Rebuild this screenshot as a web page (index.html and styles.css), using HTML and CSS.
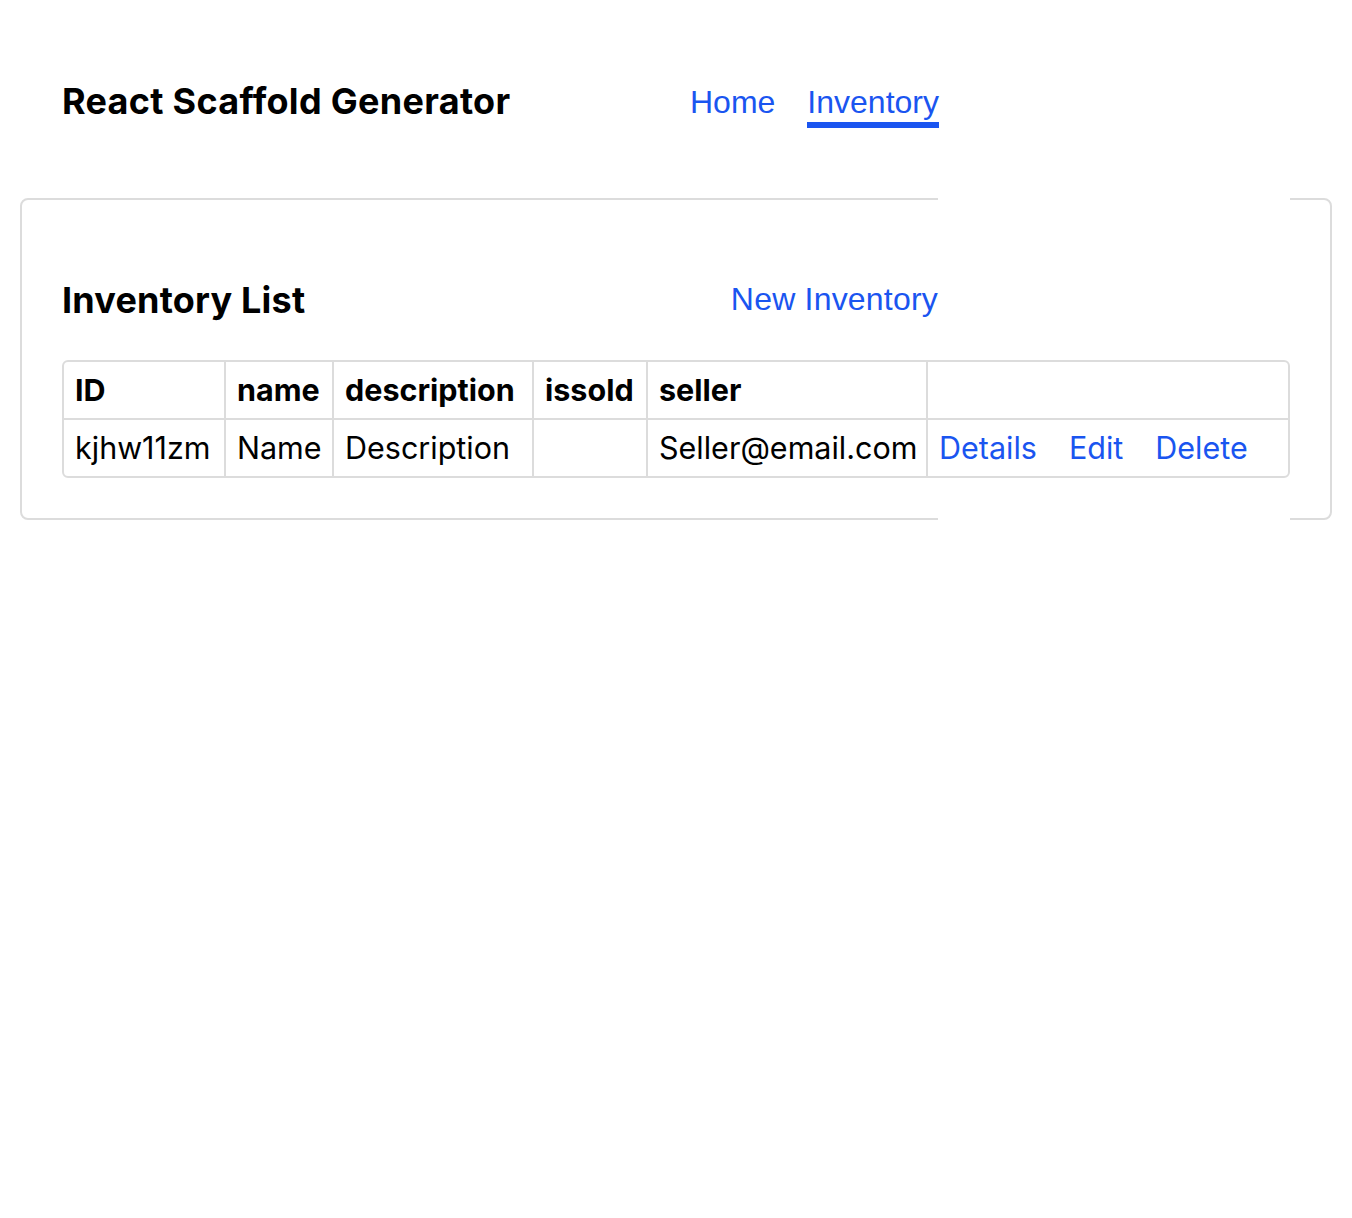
FILE: index.html
```html
<!DOCTYPE html>
<html lang="en">
<head>
<meta charset="utf-8">
<title>React Scaffold Generator</title>
<link rel="stylesheet" href="styles.css">
</head>
<body>
<header class="topbar">
  <div class="brand">React Scaffold Generator</div>
  <nav class="nav">
    <a class="nav-link" href="#">Home</a>
    <a class="nav-link active" href="#">Inventory</a>
  </nav>
</header>
<main class="card">
  <div class="card-head">
    <h2 class="card-title">Inventory List</h2>
    <a class="new-link" href="#">New Inventory</a>
  </div>
  <table class="grid">
    <colgroup>
      <col class="c-id"><col class="c-name"><col class="c-desc"><col class="c-sold"><col class="c-seller"><col class="c-actions">
    </colgroup>
    <thead>
      <tr><th>ID</th><th>name</th><th>description</th><th>issold</th><th>seller</th><th></th></tr>
    </thead>
    <tbody>
      <tr>
        <td>kjhw11zm</td><td>Name</td><td>Description</td><td></td><td>Seller@email.com</td>
        <td><div class="actions"><a href="#">Details</a><a href="#">Edit</a><a href="#">Delete</a></div></td>
      </tr>
    </tbody>
  </table>
  <span class="mask mask-top"></span>
  <span class="mask mask-bottom"></span>
</main>
</body>
</html>
```
FILE: styles.css
```css
* { box-sizing: border-box; }
body {
  margin: 0;
  background: #fff;
  color: #000;
  font-family: Inter, "Noto Sans", sans-serif;
}
a { text-decoration: none; color: #1a55f0; }

.topbar {
  display: grid;
  grid-template-columns: 628px auto;
  align-items: center;
  height: 198px;
  padding: 3px 62px 0;
}
.brand {
  font-size: 36px;
  font-weight: 700;
  letter-spacing: 0.3px;
}
.nav {
  align-self: start;
  margin-top: 81px;
  display: flex;
  gap: 32px;
  font-family: "Liberation Sans", Arial, sans-serif;
  font-size: 32px;
}
.nav-link {
  padding-bottom: 1px;
  border-bottom: 6px solid transparent;
}
.nav-link.active { border-bottom-color: #1a55f0; }

.card {
  position: relative;
  margin: 0 20px;
  border: 2px solid #dcdcdc;
  border-radius: 8px;
  padding: 0 40px 40px;
}
.card-head {
  display: flex;
  justify-content: space-between;
  align-items: center;
  width: 876px;
  height: 160px;
  padding-top: 40px;
}
.card-title {
  margin: 0;
  font-size: 36px;
  font-weight: 700;
  letter-spacing: 0.2px;
}
.new-link {
  margin-bottom: 2px;
  font-family: "Liberation Sans", Arial, sans-serif;
  font-size: 32px;
  letter-spacing: 0.2px;
}

.grid {
  width: 100%;
  table-layout: fixed;
  border-collapse: separate;
  border-spacing: 0;
  border: 2px solid #dcdcdc;
  border-radius: 6px;
  font-size: 30.5px;
  line-height: 36px;
}
.c-id { width: 160px; }
.c-name { width: 108px; }
.c-desc { width: 200px; }
.c-sold { width: 114px; }
.c-seller { width: 280px; }
.grid th, .grid td {
  text-align: left;
  padding: 10px 11px;
  height: 56px;
  white-space: nowrap;
  border-left: 2px solid #dcdcdc;
}
.grid th { font-weight: 700; }
.grid td { border-top: 2px solid #dcdcdc; }
.grid th:first-child, .grid td:first-child { border-left: 0; }
.actions { display: flex; gap: 32px; }

.mask {
  position: absolute;
  left: 916px;
  width: 352px;
  height: 4px;
  background: #fff;
}
.mask-top { top: -2px; }
.mask-bottom { bottom: -2px; }
```
